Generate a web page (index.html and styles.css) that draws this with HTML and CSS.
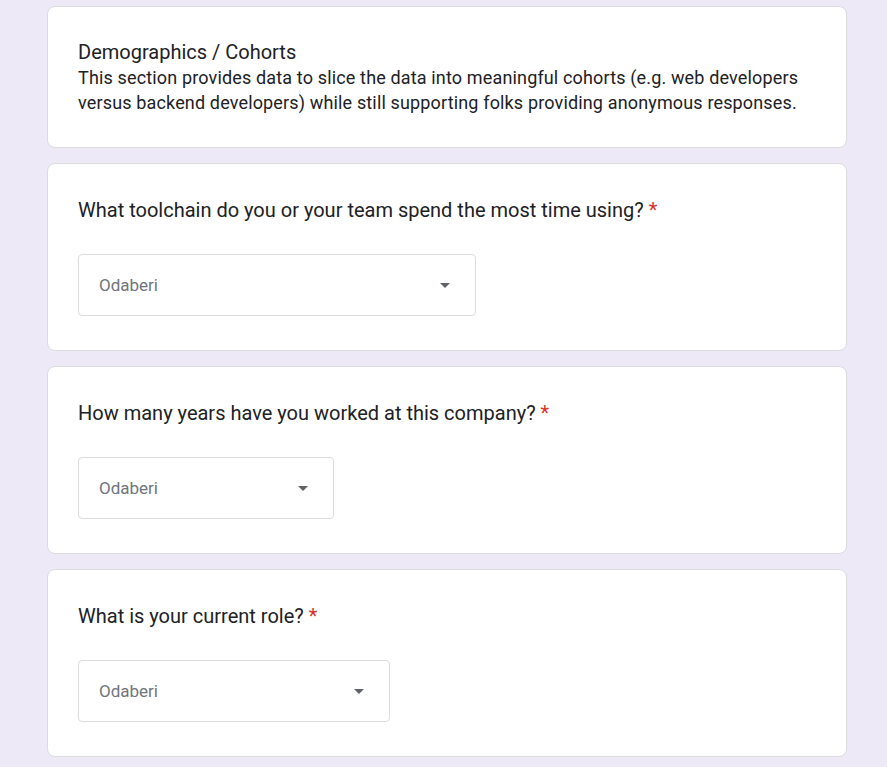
FILE: index.html
```html
<!DOCTYPE html>
<html lang="en">
<head>
<meta charset="utf-8">
<title>Demographics / Cohorts</title>
<link rel="stylesheet" href="styles.css">
</head>
<body>
<main class="form">
  <section class="card card-header">
    <div class="section-title">Demographics / Cohorts</div>
    <div class="section-desc">This section provides data to slice the data into meaningful cohorts (e.g. web developers versus backend developers) while still supporting folks providing anonymous responses.</div>
  </section>
  <section class="card card-question">
    <div class="question">What toolchain do you or your team spend the most time using?<span class="req">*</span></div>
    <div class="dropdown dropdown-wide"><span class="placeholder">Odaberi</span><span class="arrow"></span></div>
  </section>
  <section class="card card-question">
    <div class="question">How many years have you worked at this company?<span class="req">*</span></div>
    <div class="dropdown dropdown-narrow"><span class="placeholder">Odaberi</span><span class="arrow"></span></div>
  </section>
  <section class="card card-question">
    <div class="question">What is your current role?<span class="req">*</span></div>
    <div class="dropdown dropdown-mid"><span class="placeholder">Odaberi</span><span class="arrow"></span></div>
  </section>
</main>
</body>
</html>
```
FILE: styles.css
```css
html, body {
  margin: 0;
  padding: 0;
}
body {
  background: #eee9f7;
  font-family: Roboto, "Liberation Sans", Arial, sans-serif;
  color: #202124;
}
.form {
  width: 800px;
  margin-left: 47px;
  padding-top: 6px;
  display: flex;
  flex-direction: column;
  gap: 15px;
}
.card {
  background: #fff;
  border: 1px solid #dadce0;
  border-radius: 8px;
  box-sizing: border-box;
}
.card-header {
  padding: 33px 30px 32px 30px;
}
.section-title {
  font-size: 20px;
  line-height: 24px;
  margin-bottom: 1px;
}
.section-desc {
  font-size: 18px;
  line-height: 25px;
  letter-spacing: 0.15px;
}
.card-question {
  padding: 34px 30px 34px 30px;
}
.question {
  font-size: 20px;
  line-height: 24px;
}
.req {
  color: #d93025;
  margin-left: 5px;
}
.dropdown {
  margin-top: 32px;
  height: 62px;
  box-sizing: border-box;
  border: 1px solid #dadce0;
  border-radius: 4px;
  display: flex;
  align-items: center;
  justify-content: space-between;
  padding: 0 25px 0 20px;
}
.dropdown-wide { width: 398px; }
.dropdown-narrow { width: 256px; }
.dropdown-mid { width: 312px; }
.placeholder {
  font-size: 17px;
  color: #70757a;
}
.arrow {
  width: 0;
  height: 0;
  border-left: 5px solid transparent;
  border-right: 5px solid transparent;
  border-top: 5px solid #5f6368;
}
```
